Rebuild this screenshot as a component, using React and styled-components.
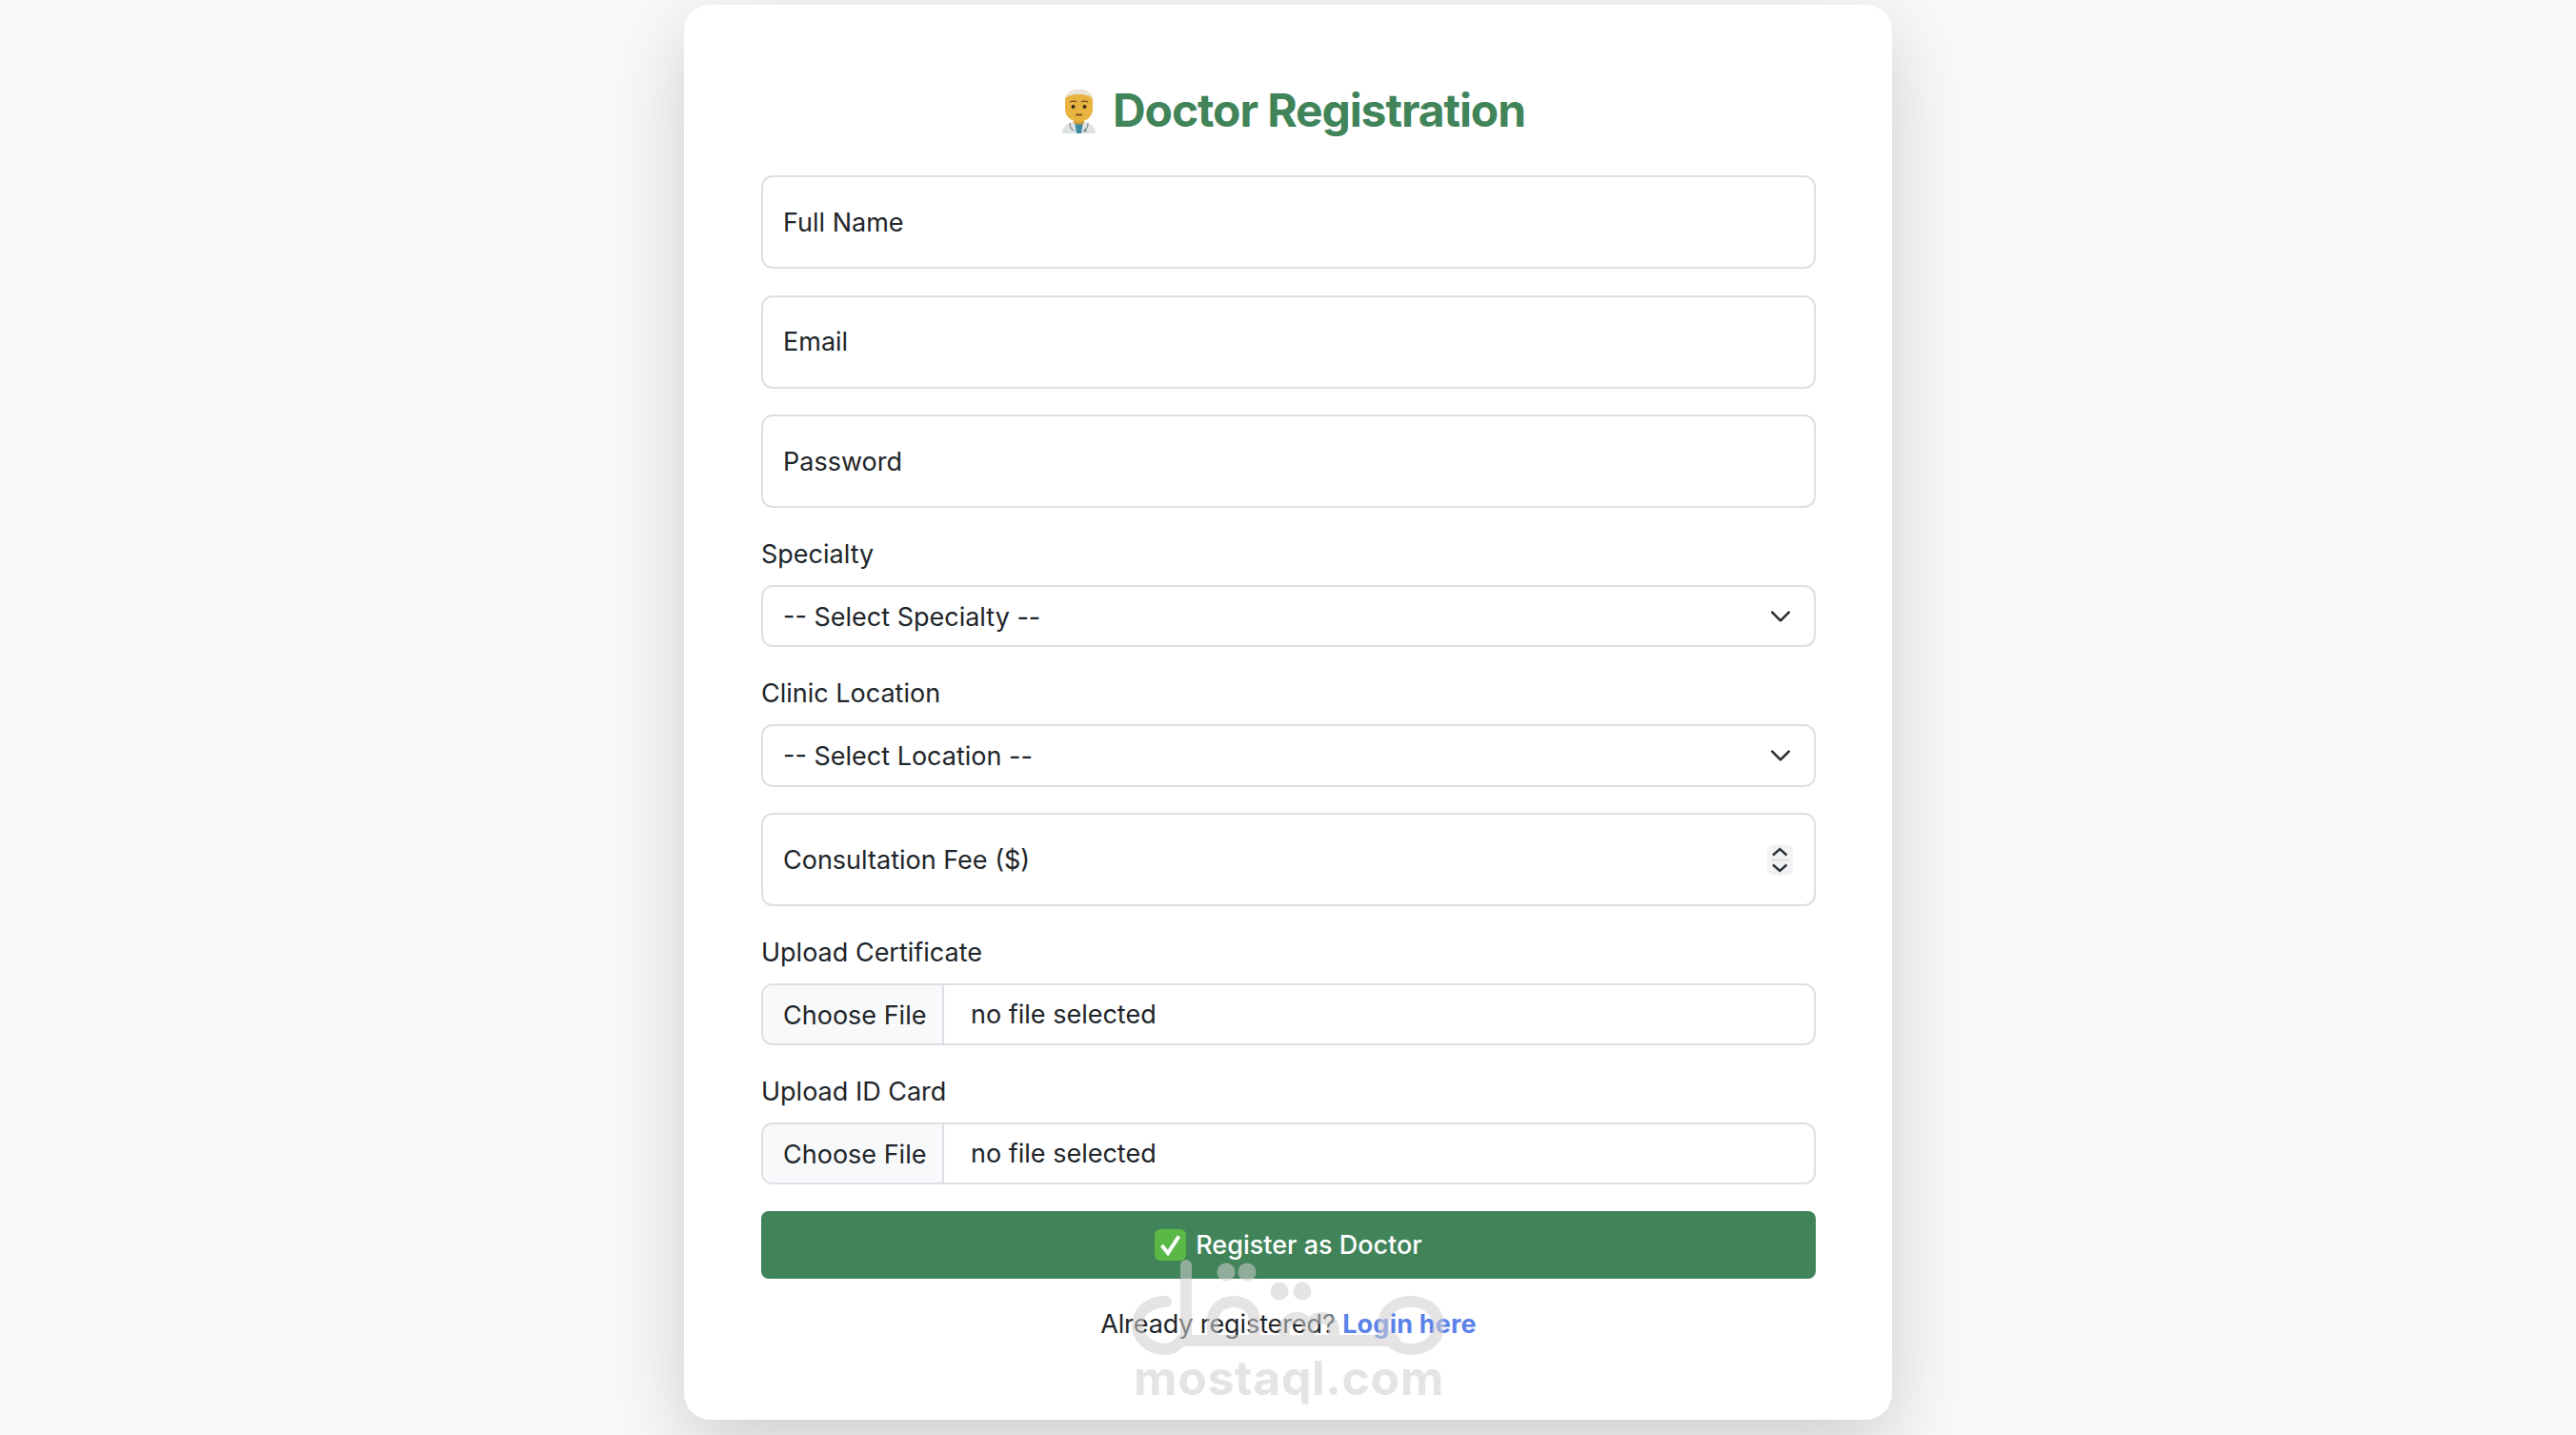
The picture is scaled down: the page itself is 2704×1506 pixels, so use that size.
import styled, { createGlobalStyle } from "styled-components";

const GlobalStyle = createGlobalStyle`
  html, body {
    margin: 0;
    padding: 0;
    height: 100%;
    background: #f8f9fa;
    color: #212529;
    font-family: Inter, "Liberation Sans", sans-serif;
    font-size: 27px;
  }
  * {
    box-sizing: border-box;
  }
`;

const Page = styled.div`
  height: 1506px;
  overflow: hidden;
  display: flex;
  justify-content: center;
  align-items: flex-start;
  padding-top: 5px;
`;

const Card = styled.form`
  position: relative;
  width: 1268px;
  height: 1485px;
  padding: 0 80px 0 81px;
  background: #fff;
  border-radius: 27.6px;
  box-shadow: 0 27.6px 83px rgba(0, 0, 0, 0.175);
`;

const Title = styled.h2`
  height: 179px;
  margin: 0;
  padding: 82px 0 0 10px;
  display: flex;
  justify-content: center;
  align-items: flex-start;
  gap: 17px;
  font-size: 48px;
  line-height: 58px;
  font-weight: 700;
  letter-spacing: -1.1px;
  color: #41845a;
`;

const Field = styled.div`
  position: relative;
  margin-bottom: 27.6px;
`;

const Label = styled.label`
  display: block;
  height: 53.2px;
  line-height: 41px;
`;

const controlBase = `
  display: block;
  width: 100%;
  border: 2px solid #dfe0e5;
  border-radius: 12px;
  background: #fff;
  color: #212529;
  font-family: inherit;
  font-size: 27px;
  outline: none;
`;

const TextInput = styled.input`
  ${controlBase}
  height: 98px;
  padding: 0 21px;
  appearance: textfield;
  &::placeholder {
    color: #212529;
    opacity: 1;
  }
  &::-webkit-inner-spin-button,
  &::-webkit-outer-spin-button {
    appearance: none;
    margin: 0;
  }
`;

const Select = styled.select`
  ${controlBase}
  height: 65.4px;
  padding: 1px 60px 0 21px;
  appearance: none;
`;

const Chevron = styled.svg`
  position: absolute;
  right: 23px;
  bottom: 18.7px;
  width: 28px;
  height: 28px;
  pointer-events: none;
`;

const Spinner = styled.div`
  position: absolute;
  right: 24px;
  top: 33px;
  width: 27px;
  height: 33px;
  border-radius: 7px;
  background: #f1f2f4;
  pointer-events: none;
`;

const FileRow = styled.div`
  ${controlBase}
  height: 65.4px;
  display: flex;
  align-items: stretch;
  overflow: hidden;
`;

const FileButton = styled.button`
  width: 190px;
  padding: 1px 0 0 21px;
  text-align: left;
  border: none;
  border-right: 2px solid #dfe0e5;
  background: #f8f9fa;
  color: #212529;
  font-family: inherit;
  font-size: 27px;
`;

const FileName = styled.span`
  padding-left: 28px;
  line-height: 62px;
`;

const Submit = styled.button`
  width: 100%;
  height: 71px;
  border: none;
  border-radius: 8px;
  background: #41845a;
  color: #fff;
  font-family: inherit;
  font-size: 27px;
  font-weight: 500;
  display: flex;
  justify-content: center;
  align-items: center;
  gap: 10px;
`;

const Footer = styled.p`
  margin: 27px 0 0;
  text-align: center;
  line-height: 41px;
  letter-spacing: -0.1px;
`;

const LoginLink = styled.a`
  color: #5b82ea;
  font-weight: 700;
  letter-spacing: 0.2px;
  text-decoration: none;
`;

const Watermark = styled.div`
  position: absolute;
  left: 470px;
  top: 1315px;
  width: 330px;
  opacity: 0.55;
  pointer-events: none;
  display: flex;
  flex-direction: column;
  align-items: center;
`;

const WatermarkLogo = styled.svg`
  display: block;
  width: 330px;
  height: 108px;
`;

const WatermarkText = styled.div`
  margin-top: -12px;
  font-size: 50px;
  line-height: 60px;
  font-weight: 700;
  letter-spacing: 0.6px;
  color: #cfcfcf;
  white-space: nowrap;
`;

function DoctorEmoji() {
  return (
    <svg width="37" height="48" viewBox="0 0 37 48" style={{ marginTop: 6 }}>
      <path d="M1 47c0-7 5-10 11-12h13c6 2 11 5 11 12z" fill="#dfe3e3" />
      <path d="M14 35h9l-2 12h-5z" fill="#3c8aa0" />
      <path d="M9 36c0 5 2 7 4 8M28 36c0 5-2 7-4 8" stroke="#7f8a8a" strokeWidth="1.2" fill="none" />
      <circle cx="25" cy="44" r="1.6" fill="#7f8a8a" />
      <path d="M13 30h11v6c-2 2-9 2-11 0z" fill="#cf9b35" />
      <path d="M4 13C4 5 10 1 18.500 1S33 5 33 13v9c0 7-7 13-14.500 13S4 29 4 22z" fill="#e9b341" />
      <path d="M5 10C6 4 11 1 18.500 1S31 4 32 10c-3-3-7-4-13.500-4S8 7 5 10z" fill="#e8e6df" />
      <path d="M9 14c2-1 5-1 7 0M21 14c2-1 5-1 7 0" stroke="#6b4e1a" strokeWidth="1.2" fill="none" />
      <circle cx="12.500" cy="19" r="2" fill="#3a2c16" />
      <circle cx="24.500" cy="19" r="2" fill="#3a2c16" />
      <path d="M15 27.500h7" stroke="#6b3f14" strokeWidth="1.600" />
    </svg>
  );
}

function CheckEmoji() {
  return (
    <svg width="33" height="33" viewBox="0 0 33 33">
      <rect x="0" y="0" width="33" height="33" rx="6" fill="#5ab946" />
      <path d="M7.500 17l6.500 8L25.500 7.500" stroke="#fff" strokeWidth="4" fill="none" />
    </svg>
  );
}

function SelectChevron() {
  return (
    <Chevron viewBox="0 0 16 16">
      <path d="M3 5.500l5 5 5-5" stroke="#2a2f33" strokeWidth="1.500" fill="none" strokeLinecap="round" strokeLinejoin="round" />
    </Chevron>
  );
}

function SelectField({ label, placeholder }) {
  return (
    <Field>
      <Label>{label}</Label>
      <Select defaultValue="">
        <option value="">{placeholder}</option>
      </Select>
      <SelectChevron />
    </Field>
  );
}

function FileField({ label }) {
  return (
    <Field>
      <Label>{label}</Label>
      <FileRow>
        <FileButton type="button">Choose File</FileButton>
        <FileName>no file selected</FileName>
      </FileRow>
    </Field>
  );
}

export default function App() {
  return (
    <>
      <GlobalStyle />
      <Page>
        <Card>
          <Title>
            <DoctorEmoji />
            Doctor Registration
          </Title>
          <Field>
            <TextInput type="text" placeholder="Full Name" />
          </Field>
          <Field>
            <TextInput type="email" placeholder="Email" />
          </Field>
          <Field>
            <TextInput type="password" placeholder="Password" />
          </Field>
          <SelectField label="Specialty" placeholder="-- Select Specialty --" />
          <SelectField label="Clinic Location" placeholder="-- Select Location --" />
          <Field>
            <TextInput type="number" placeholder="Consultation Fee ($)" />
            <Spinner>
              <svg width="27" height="33" viewBox="0 0 27 33">
                <path d="M6 11.500L13.300 5l7.200 6.500M6 21.500l7.300 6.500 7.200-6.500" stroke="#2a2f33" strokeWidth="2.400" fill="none" />
                <path d="M4 16.500h19" stroke="#d8d9dc" strokeWidth="1.500" />
              </svg>
            </Spinner>
          </Field>
          <FileField label="Upload Certificate" />
          <FileField label="Upload ID Card" />
          <Submit type="submit">
            <CheckEmoji />
            Register as Doctor
          </Submit>
          <Footer>
            Already registered? <LoginLink href="#">Login here</LoginLink>
          </Footer>
          <Watermark>
            <WatermarkLogo viewBox="0 0 330 108">
              <g stroke="#cfcfcf" strokeWidth="12" fill="none" strokeLinecap="round">
                <path d="M57 8V87" />
                <path d="M36 46C16 46 6 58 6 71S18 96 36 96C44 96 48 91 52 87H270C276 92 283 96 292 96C310 96 322 86 322 71S310 46 292 46S264 58 264 71S272 84 276 87" />
                <path d="M85 87V66C85 54 95 46 107 46S129 54 129 66V87" />
                <path d="M160 87V76C160 68 166 63 173 63S186 68 186 76V87M186 76C186 68 192 63 199 63S212 68 212 76V87" />
              </g>
              <g fill="#cfcfcf">
                <circle cx="99" cy="15" r="9.500" />
                <circle cx="121" cy="15" r="9.500" />
                <circle cx="155" cy="35" r="9.500" />
                <circle cx="179" cy="35" r="9.500" />
              </g>
            </WatermarkLogo>
            <WatermarkText>mostaql.com</WatermarkText>
          </Watermark>
        </Card>
      </Page>
    </>
  );
}
